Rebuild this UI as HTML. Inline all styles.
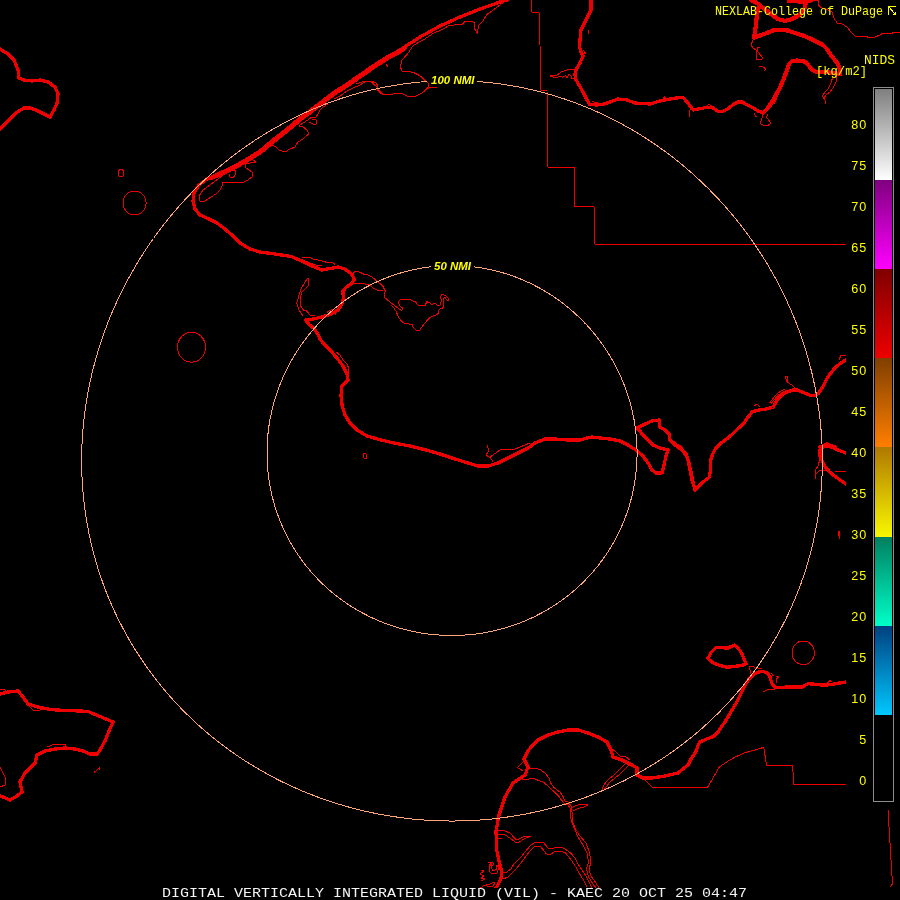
<!DOCTYPE html>
<html><head><meta charset="utf-8"><title>DIGITAL VERTICALLY INTEGRATED LIQUID (VIL) - KAEC</title>
<style>
html,body{margin:0;padding:0;background:#000;}
body{width:900px;height:900px;overflow:hidden;}
svg{display:block;}
.mono{font-family:"Liberation Mono",monospace;}
.sans{font-family:"Liberation Sans",sans-serif;}
</style></head><body>
<svg width="900" height="900" viewBox="0 0 900 900">
<defs><linearGradient id="g0" x1="0" y1="0" x2="0" y2="1"><stop offset="0" stop-color="#7f7f7f"/><stop offset="1" stop-color="#ffffff"/></linearGradient><linearGradient id="g1" x1="0" y1="0" x2="0" y2="1"><stop offset="0" stop-color="#7f007f"/><stop offset="1" stop-color="#ff00ff"/></linearGradient><linearGradient id="g2" x1="0" y1="0" x2="0" y2="1"><stop offset="0" stop-color="#7f0000"/><stop offset="1" stop-color="#ee0000"/></linearGradient><linearGradient id="g3" x1="0" y1="0" x2="0" y2="1"><stop offset="0" stop-color="#7f3f00"/><stop offset="1" stop-color="#ff7f00"/></linearGradient><linearGradient id="g4" x1="0" y1="0" x2="0" y2="1"><stop offset="0" stop-color="#b07800"/><stop offset="1" stop-color="#f8f800"/></linearGradient><linearGradient id="g5" x1="0" y1="0" x2="0" y2="1"><stop offset="0" stop-color="#007f60"/><stop offset="1" stop-color="#00ffc8"/></linearGradient><linearGradient id="g6" x1="0" y1="0" x2="0" y2="1"><stop offset="0" stop-color="#004080"/><stop offset="1" stop-color="#00c8ff"/></linearGradient>
<filter id="idt" filterUnits="userSpaceOnUse" x="0" y="0" width="900" height="900" color-interpolation-filters="sRGB"><feOffset dx="0" dy="0"/></filter>
<clipPath id="mapclip"><path d="M0 0H900V42H846V808H900V900H0Z"/></clipPath>
</defs>
<rect width="900" height="900" fill="#000"/>
<g clip-path="url(#mapclip)" shape-rendering="crispEdges" fill="none" stroke="#ee0000" stroke-linejoin="round" stroke-linecap="round">
<path stroke-width="3.3" d="M0 49 L8 54 L14 60 L18 70 L19 78 L24 80 L32 81 L40 80 L48 82 L55 87 L58 94 L57 103 L54 110 L50 117 L44 114 L36 110 L30 108 L24 108 L16 113 L8 121 L0 129 M507 0 L500 2 L480 9 L460 17 L440 26 L420 37 L400 50 L387 57 L373 66 L360 75 L347 84 L333 93 L320 103 L307 113 L300 118 L287 129 L273 140 L260 151 L247 159 L233 167 L220 173 L207 179 L199 185 L194 193 L193 201 L195 209 L200 215 L209 219 L217 223 L225 229 L233 236 L240 243 L250 249 L260 252 L275 254 L291 256.5 L302 261 L313 266.5 L322 270 L330 268.5 L338 267 L344.5 269 L351 273.5 L354.5 279 L352 283.5 L346.5 287 L343 291 L343.3 298 L342.5 303 L338 310 L330 314.5 L322 317 L313 319 L305.5 320 L309 324.5 L314.5 329 L318 334.5 L320 339 L323 343 L330 350 L337 358 L343 366 L347 374 L348 380 L342 386 L341 395 L342 405 L345 415 L350 423 L357 430 L367 436 L380 439.7 L395 443.3 L410 446 L425 449.7 L440 454 L455 459 L468 463 L478 466 L488 466 L498 463 L508 458 L518 453 L528 448 L535 443 L545 439 L555 439 L568 440 L580 440 L587 438 L592 437 L600 438 L610 439 L620 441 L628 445 L636 450 L643 456 L648 463 L652 470 L656 473 L662 473 L664 465 L666 456 L668 450 L660 448 L653 445 L648 440 L643 435 L639 430 L637 428 L645 424 L652 421 L659 420 L660 427 L665 430 L669 434 L670 440 L675 445 L680 448 L686 455 L689 463 L691 472 L693 482 L695 490 L700 485 L703.3 481.7 L709.2 477.5 L710.8 468.3 L710.8 460 L712.5 454.2 L715.8 448.3 L720.8 443.3 L727.5 438.3 L733.3 433.3 L740 426.7 L745 421.7 L748.3 416.7 L752.5 411.7 L758.3 410 L765 409.2 L772.5 407.5 L775 404.2 L777.5 399.2 L781.7 395 L786.7 392.5 L792.5 390 L797.5 390 L803.3 392.5 L809.2 395 L814.2 395.8 L818.3 393.7 L822.5 387.5 L825.8 380.8 L829.2 375 L833.3 370 L838.3 365 L846 359.5 M695 490 L692 480 L690 470 L688 460 L686 454 L680 447 L675 444 L670 440 M591 0 L591 10 L586 20 L581 30 L580 40 L579.5 47 L581 52 L583 56 L580.5 62 L577 68 L575 73.5 L575.5 79 L579 85 L583 92 L586.5 99 L589.5 104.5 L597 105 L604 104 L610 102 L618 99 L627 100 L635 103 L650 104 L660 101 L668 99.3 L676 98 L683 97.3 L687 102 L691 107 L693.3 110 L700 108.7 L707 107.3 L713.3 108 L718 111.3 L723 111.3 L728 108.7 L733 104.7 L737.5 102 L742 102 L747 104.7 L753.3 108 L759 111.5 L763.3 112.7 M846 453 L840 450.8 L834.2 448.3 L828.3 445.8 L823.3 446.7 L820 450 L820 455.8 L822.5 461.7 L825 466.7 L829.2 471.7 L834.2 475.8 L840 480 L846 484 M820 447 L827 444 L835 447 M707.8 658.4 L711.3 652.2 L715.8 647.8 L722 647.8 L728 648 L734.4 645.1 L738 647.8 L741.6 653.1 L744.2 659.3 L746 663.8 L741.6 665.6 L734.4 666.4 L727.3 667.3 L720.2 665.6 L713.1 662.9 L707.8 658.4 M496 888 L498.7 883.3 L501.3 877.3 L501.3 870 L499.3 862 L496.7 850 L496 831 L499 815 L505 797 L513 783 L525 775 L528 767 L524 759 L528 751 L531 747 L538 740 L548 735 L558 732 L568 730 L578 730 L588 733 L598 737 L607 742 L611 750 L613 757 L622 760 L632 765 L637 768 L637 775 L643 778 L652 778 L665 776 L678 773 L688 765 L691 759 L695.3 752.7 L699.5 742 L706 739.3 L713 736.7 L718.4 731.3 L724.7 722.4 L731 711.8 L736.2 703 L740.7 694 L745 685 L749.6 678 L755 673.6 L761 671.2 L767.3 672.7 L770 677 L771.8 683.3 L775.3 687.8 L780.7 687.8 L786 687 L795 687 L802 687 L808.2 683.7 L814.4 684.2 L821.6 685 L830.4 684.8 L837.6 683.3 L846 682 M0 694 L8 692 L18 691 L23 697 L28 704 L38 707 L50 709.5 L65 710.5 L80 711 L88 711.5 L100 716.5 L113 722 L109 731 L105 741 L100 750 L97 754 L90 754 L83 751 L75 749 L65 748 L55 749 L45 751 L37 755 L35 763 L30 768 L25 773 L20 782 L22 792 L17 796 L10 800 L3 797 L0 796"/>
<path stroke-width="4.2" d="M763.3 112.7 L768 108 L772 102 L776 95 L780 87.5 L784 78 L787 70 L789 64 L792 61 L797 60.5 L802 61 L806 62 L809 66 L812 70 L817 72 L825 72 L833 73 L840 74 L840 70 L838 64 L834 59 L830 54 L827 49 L823 45 L817 42 L810 38.5 L803 35.5 L795 33 L788 30.5 L780 30 L773 30.5 L767 33 L760 35.5 L754 37.5 L755 32 L756 24 L757 15 L759 5 M751 0 L757 3 L760 5.5 L766 10 L772 15 L778 19 L785 21 L792 19 L798 16 L803 12 L805 7 L806 2 L807 0 M789 1 L800 1.5 L806 1.5 L812 0"/>
<path stroke-width="3.3" d="M404 47 L400 50 L387 57 L373 66 L360 75 L347 84 L333 93 L320 103 L307 113 L300 118 L287 129 L273 140 L260 151 L247 159 L233 167 L220 173 L210 177" transform="translate(1,1.4)"/>
<path stroke-width="1" d="M531 0 L532 12 L539 13 L540 45 L541 90 L547 90 L548 167 L574 167 L574 206 L594 206 L595 244 L846 244 M652 787 L707.8 787 L719.3 767 L727.3 761.6 L735.3 757 L745 752.7 L755 750 L763.8 747.3 L766.5 765.5 L792.5 765.5 L794 784.5 L846 784.5 M643 778 L650 785 L652 787 M888 810 L890 843 L892.5 884 L890 887 M812 0 L818 0 L818 5 L822 8 L826 9 L832 12 L834 18 L837 23 L842 24 L847 27 L851 32 L855 36 L860 37 L865 36 L870 38 L875 37 L880 35 L883 33 L890 34 L895 32 L900 33 M506.7 0 L496 8 L486.7 14.7 L482.7 21.3 L478.7 25.3 L477.3 33.3 L474 28 L474.7 22.7 L472 21.3 L465.3 21.3 L462.7 24 L458.7 24.7 L449.3 25.3 L444 28.7 L433.3 33.3 L425.3 38.7 L413.3 45.3 L408 53.3 L402.7 59.3 L401.6 60.7 L400.4 67.2 L402.3 71.5 L408.8 71.5 L414.6 73 L420.3 76 L424 79.5 L428 83 L429 86.7 L426 89.6 L421.8 93.2 L416 96 L407.3 96 L403 94 L395.8 93.6 L390 94.5 L382 94 L377 87 L370 81 L362 82 L356 84 M428 88.5 L432 87 L437 88 M272 145 L276 147 L279 150 L285 152 L290 149 L295 147 L298 142 L303 139 L306 136 L309 134 L307 130 L303 127 L299 126 L303 123 L308 120 L312 117 L316 117 L318 114 L320 110 L323 107 L328 104 M309 122 L313 124 L316 124 L316 120 L312 119 M224 174 L222 176 L215 181 L210 185 L203 190 L199 196 L200 201 L205 201 L211 197 L216 194 L220 190 L222 186 L223 182 L230 183 L236 182 L242 183 L248 180 L252 177 L252 172 L249 170 L246 168 L245 164 L250 163 L256 162 L253 160 M229 174 L230 177 L233 178 L235 175 L235 170 L232 170 M334 99 L340 96 L347 91 L353 88 L360 85 L366 81 L371 81 L376 83 L378 86 L377 89 L380 93 L383 94 M386 64 L388 67 M308 278 L305 282 L301 289 L299 295.5 L296.7 303.3 L299 310 L303 316 M308 278 L309 279 L308.3 286 L305 289 L302 292 L300 298 L300 305 L303.3 310 L306.7 311 L310 315 L315 316 M302 258 L308 257 L313.3 259 L320 260.5 L325.5 262 L328 263 L331 262 L334.5 264 M353 275 L354 272.3 L356.7 271 L360 272.3 L364 274.3 L368 275 L372 277 L375.3 279.7 L379.3 283 L383.3 287 L385.3 291 L384 295 L384.7 297.7 L388 300.3 L391.3 303 L394 305 L397.3 307.7 L400 309.7 L402 310.3 L403 308 L400 306.3 L398.4 303 L399.3 300.3 L403.3 299 L409.3 299 L413.3 301 L415 301 L417.3 304.3 L418.7 305.7 L425.3 305.4 L426.7 301.7 L430 303 L432 305 L434 303 L437.3 305 L440 305 L441.3 301 L440.7 296.3 L442 294.3 L445.3 295.7 L448 297.7 L449 301 L447 300 L444.7 297 L443 299 L444 303.7 L443.3 307.7 L440 309 L438 311 L439 313 L436 315 L430.7 317 L426.7 321 L422.7 325.7 L420 329.7 L419 331 L416 330.3 L412.7 327 L412 324.3 L409 324 L405.3 323.7 L402 321.7 L398.7 317.7 L397.3 314.3 L396 311 L394 308.3 L391 305 M350 283 L354 283.7 L358 284 L362 283 L366 284.3 L370 285 L372.7 287.7 L376 289.7 L380 290.7 L383 290 M336 352 L340 355 L343 360 L347 364 L349 369 L348 374 M364 453 L366 454 L367 458 L365 459 L363 457 L364 453 M487.5 446 L489 451 L486 455 L490 457.5 L492.5 461 M490 457 L500 450 L515 449 L522.5 446 L530 443 M574.5 69.5 L568.3 69.5 L561.7 71.7 L560 73 L557 75 L554 75.6 L550.5 76 L553 77 L556.7 77.8 L560 76 L562.8 77.2 L565.6 75.6 L567.2 77.8 L569 74 L571 75.6 L572.2 79 L574 78 M753 40 L751 45 L753 48 L756 50 L756 59 L762 59 L762.5 57.5 L758 52 L757 48 L760 47 M759.5 66.6 L763 67 L765.7 69 L764 71 M833 76 L831 83 L828 89 L825 92 L822.5 96 L825 100 L826 104 M837 76 L836 82 L833 88 L830 92 L826 95 L824 98 M762 114 L762 118 L760 123.3 L763.3 125.3 L768 125.3 L770.7 123.3 L768.7 120 L766.7 118 L767.3 114 M691 108 L689.3 112 L690 117.3 M588 30 L588 34 M839 360 L841 355 L846 355 M785 376 L787 382 L792 385 L796 389 M785 376 L788 377 L787 382 M771 404 L774 400 L777 396.5 L781 393 L785 391 L788 390 M754 406 L757 404 L760 407 M819 456 L819.2 461.7 L818.3 465.8 L815 470 L815 476.7 L816 479 L815 475 L817.5 472.5 L820 470.3 L826 470 M835 472 L840 471.3 L846 471 M839 531 L840 539 L838.5 535 L839 531 M675 444 L678 449 L683 452 M763 692 L767 690 L771 689 L775 690 M751 674 L750 670 L749 666 L753 666 L756 669 M771 673 L773 675.5 M528 768 L533 768 L540 769.5 L545 773 L549 778 L551 783.5 L554.5 788 L560 792 L563 796.5 L565 801 L568 802 L571 806 L572 812 L572 820 L575 828 L579.5 835.5 L586 843 L589.5 852.5 L591 862 L589 869 L591 876 L596 883 L599 888 M522 780 L527 779.5 L533 778 L537.5 780 L543 782 L547 785 L551 789 L554.5 792 L558.5 796 L561.5 800 L564 803 L568 805 L570 808 L570 815 L572 823 L575 830 L578 837 L583 845 L587 853 L588.5 862 L586.5 869 L588.5 877 L593 884 L596 888 M571 808 L575 806 L579.5 804.5 L585 804 L588 805 L584 807 L578 808.5 L574 810.5 M498 830 L505 831 L510 833 L513.5 837 L516.5 840 L520.5 838.5 L524 836.5 L531 836 L524 839 L519 842 L515 842 L510 838 L505 835 L498 834 M503 873 L507 872 L511 869 L514 864 L518 860 L522 856 L525 852 L530 846 L533 843.5 L536 842 L543 842 L546 845.5 L549 849 L554.5 848 L561 847 L566 849.5 L571 853.5 L575 858 L578 864 L582 870 L586 876 L589.5 883 L592 888 M503 879 L508 877 L512 873 L516 869 L520 864 L524 859 L527 855 L530 851 L533 848 L535 846 L540 846 L543 849.5 L546 853.5 L550 855 L554 852 L560 851 L565 852.5 L568.5 856.5 L572.5 862 L576.5 868 L580 874.5 L583.5 880 L587 887 M627 762 L623 766 L619 770 L614 775 L609 779 L606 782 L603.5 786 L602 790 M630 764 L625 769 L620 774 L615 778 L610 782 L607 786 L604 790 L602 790 M522.5 762.5 L517.5 767.5 L523 771 M481 870 L484 871 L480 874 L484 876 L481 878 L485 879 L481 881 M489 866 L492 862 L494 864 L491 867 L493 871 L497 869 L496 865 L499 867 L497 873 L492 874 L489 871 L489 866 M481 887.5 L484 885.5 L489 884.5 L493 882.5 L495 883 L493 886 L487 887 M607 744 L611 748 L616 752 L620 756 L626 757 L630 760 M94.5 772 L99.5 768 L99 770 M28 705 L33 710 L38 711 L42 709 M47 747 L55 744 L65 744 L65 748 M0 767 L5 777 L5 785 L0 787 M0 690 L4 689 L7 692 M498 838 L502 838.5 M488 863 L491 862 L492 865 L489 866 M305 261 L311 263.3 L315.5 265 L322 266 M327.5 312 L332 309.5 L335.5 314 M583 50 L585.5 53 L583 55 M591.7 101 L595 102.5 L598 102 M707 106 L709.3 104.3 L711.5 106 M663 99 L664.5 97 L666 99 M754.5 114 L756 116.5 M774 104 L776.5 99 L775 98 M770 402.5 L773 398.5 L776 395 L780 391.5 L784 389.5 M758 668 L762 669 M776 676 L779 677 L776 679 L776 683 M828 682.5 L830 680.5 L832 682"/>
<ellipse cx="121" cy="173.2" rx="3" ry="3.7" stroke-width="1"/><ellipse cx="134.6" cy="203" rx="11.5" ry="12" stroke-width="1"/><ellipse cx="191.5" cy="347.2" rx="14" ry="15" stroke-width="1"/><ellipse cx="803.2" cy="652.8" rx="11.2" ry="11.8" stroke-width="1"/>
</g>
<g shape-rendering="crispEdges" fill="none" stroke="#fca67a" stroke-width="1">
<path d="M477.1 81.5 L480.3 81.7 L483.4 82.0 L486.5 82.3 L489.7 82.6 L492.8 83.0 L495.9 83.4 L499.0 83.8 L502.1 84.2 L505.3 84.7 L508.4 85.2 L511.5 85.7 L514.6 86.2 L517.7 86.8 L520.8 87.4 L523.9 88.0 L526.9 88.7 L530.0 89.4 L533.1 90.1 L536.2 90.8 L539.2 91.6 L542.3 92.4 L545.3 93.2 L548.4 94.1 L551.4 94.9 L554.4 95.8 L557.4 96.8 L560.5 97.7 L563.5 98.7 L566.5 99.7 L569.4 100.8 L572.4 101.8 L575.4 102.9 L578.4 104.0 L581.3 105.2 L584.3 106.4 L587.2 107.6 L590.1 108.8 L593.1 110.0 L596.0 111.3 L598.9 112.6 L601.7 113.9 L604.6 115.3 L607.5 116.7 L610.3 118.1 L613.2 119.5 L616.0 120.9 L618.8 122.4 L621.7 123.9 L624.4 125.5 L627.2 127.0 L630.0 128.6 L632.8 130.2 L635.5 131.8 L638.3 133.5 L641.0 135.2 L643.7 136.9 L646.4 138.6 L649.1 140.3 L651.7 142.1 L654.4 143.9 L657.0 145.7 L659.6 147.5 L662.2 149.4 L664.8 151.3 L667.4 153.2 L670.0 155.1 L672.5 157.1 L675.1 159.1 L677.6 161.1 L680.1 163.1 L682.6 165.1 L685.0 167.2 L687.5 169.3 L689.9 171.4 L692.3 173.5 L694.7 175.7 L697.1 177.9 L699.5 180.1 L701.8 182.3 L704.2 184.5 L706.5 186.8 L708.8 189.0 L711.0 191.3 L713.3 193.6 L715.5 196.0 L717.8 198.3 L720.0 200.7 L722.1 203.1 L724.3 205.5 L726.4 207.9 L728.6 210.4 L730.7 212.8 L732.7 215.3 L734.8 217.8 L736.8 220.3 L738.9 222.9 L740.9 225.4 L742.8 228.0 L744.8 230.6 L746.7 233.2 L748.7 235.8 L750.5 238.5 L752.4 241.1 L754.3 243.8 L756.1 246.5 L757.9 249.2 L759.7 251.9 L761.5 254.6 L763.2 257.4 L764.9 260.1 L766.6 262.9 L768.3 265.7 L769.9 268.5 L771.5 271.3 L773.1 274.2 L774.7 277.0 L776.3 279.9 L777.8 282.7 L779.3 285.6 L780.8 288.5 L782.2 291.4 L783.7 294.3 L785.1 297.3 L786.5 300.2 L787.8 303.2 L789.2 306.2 L790.5 309.1 L791.8 312.1 L793.0 315.1 L794.3 318.1 L795.5 321.2 L796.7 324.2 L797.8 327.2 L799.0 330.3 L800.1 333.3 L801.1 336.4 L802.2 339.5 L803.2 342.6 L804.2 345.7 L805.2 348.8 L806.2 351.9 L807.1 355.0 L808.0 358.1 L808.9 361.2 L809.7 364.4 L810.5 367.5 L811.3 370.7 L812.1 373.8 L812.8 377.0 L813.5 380.2 L814.2 383.3 L814.9 386.5 L815.5 389.7 L816.1 392.9 L816.7 396.1 L817.2 399.3 L817.7 402.5 L818.2 405.7 L818.7 408.9 L819.1 412.1 L819.5 415.3 L819.9 418.5 L820.3 421.8 L820.6 425.0 L820.9 428.2 L821.2 431.4 L821.4 434.7 L821.6 437.9 L821.8 441.1 L822.0 444.3 L822.1 447.6 L822.2 450.8 L822.3 454.0 L822.3 457.3 L822.3 460.5 L822.3 463.7 L822.3 466.9 L822.2 470.2 L822.1 473.4 L822.0 476.6 L821.8 479.8 L821.7 483.1 L821.5 486.3 L821.2 489.5 L820.9 492.7 L820.7 495.9 L820.3 499.1 L820.0 502.3 L819.6 505.5 L819.2 508.7 L818.8 511.9 L818.3 515.1 L817.8 518.3 L817.3 521.4 L816.7 524.6 L816.1 527.8 L815.5 530.9 L814.9 534.1 L814.2 537.2 L813.6 540.4 L812.8 543.5 L812.1 546.6 L811.3 549.7 L810.5 552.8 L809.7 555.9 L808.8 559.0 L807.9 562.1 L807.0 565.2 L806.1 568.3 L805.1 571.3 L804.1 574.4 L803.1 577.4 L802.0 580.4 L801.0 583.5 L799.9 586.5 L798.7 589.5 L797.6 592.5 L796.4 595.4 L795.2 598.4 L793.9 601.4 L792.6 604.3 L791.3 607.3 L790.0 610.2 L788.7 613.1 L787.3 616.0 L785.9 618.9 L784.5 621.7 L783.0 624.6 L781.5 627.4 L780.0 630.3 L778.5 633.1 L776.9 635.9 L775.4 638.7 L773.7 641.5 L772.1 644.2 L770.4 647.0 L768.8 649.7 L767.0 652.4 L765.3 655.1 L763.5 657.8 L761.8 660.5 L760.0 663.1 L758.1 665.8 L756.3 668.4 L754.4 671.0 L752.5 673.6 L750.5 676.2 L748.6 678.7 L746.6 681.3 L744.6 683.8 L742.6 686.3 L740.5 688.8 L738.4 691.2 L736.3 693.7 L734.2 696.1 L732.1 698.5 L729.9 700.9 L727.7 703.3 L725.5 705.6 L723.3 708.0 L721.0 710.3 L718.8 712.6 L716.5 714.8 L714.2 717.1 L711.8 719.3 L709.5 721.5 L707.1 723.7 L704.7 725.9 L702.3 728.1 L699.8 730.2 L697.4 732.3 L694.9 734.4 L692.4 736.5 L689.9 738.5 L687.3 740.5 L684.8 742.5 L682.2 744.5 L679.6 746.5 L677.0 748.4 L674.4 750.3 L671.7 752.2 L669.0 754.1 L666.4 755.9 L663.7 757.7 L660.9 759.5 L658.2 761.3 L655.4 763.0 L652.7 764.7 L649.9 766.4 L647.1 768.1 L644.3 769.8 L641.4 771.4 L638.6 773.0 L635.7 774.6 L632.8 776.1 L629.9 777.7 L627.0 779.2 L624.1 780.7 L621.2 782.1 L618.2 783.5 L615.3 784.9 L612.3 786.3 L609.3 787.7 L606.3 789.0 L603.3 790.3 L600.2 791.6 L597.2 792.8 L594.2 794.0 L591.1 795.2 L588.0 796.4 L584.9 797.6 L581.8 798.7 L578.7 799.8 L575.6 800.8 L572.5 801.9 L569.3 802.9 L566.2 803.9 L563.0 804.8 L559.9 805.8 L556.7 806.7 L553.5 807.5 L550.3 808.4 L547.1 809.2 L543.9 810.0 L540.7 810.8 L537.5 811.5 L534.2 812.2 L531.0 812.9 L527.8 813.6 L524.5 814.2 L521.3 814.8 L518.0 815.4 L514.7 815.9 L511.5 816.4 L508.2 816.9 L504.9 817.4 L501.6 817.8 L498.3 818.2 L495.0 818.6 L491.7 819.0 L488.4 819.3 L485.1 819.6 L481.8 819.9 L478.5 820.1 L475.2 820.3 L471.9 820.5 L468.6 820.6 L465.3 820.8 L462.0 820.9 L458.6 820.9 L455.3 821.0 L452.0 821.0 L448.7 821.0 L445.4 820.9 L442.0 820.9 L438.7 820.8 L435.4 820.6 L432.1 820.5 L428.8 820.3 L425.5 820.1 L422.2 819.9 L418.9 819.6 L415.6 819.3 L412.3 819.0 L409.0 818.6 L405.7 818.2 L402.4 817.8 L399.1 817.4 L395.8 816.9 L392.5 816.4 L389.3 815.9 L386.0 815.4 L382.7 814.8 L379.5 814.2 L376.2 813.6 L373.0 812.9 L369.8 812.2 L366.5 811.5 L363.3 810.8 L360.1 810.0 L356.9 809.2 L353.7 808.4 L350.5 807.5 L347.3 806.7 L344.1 805.8 L341.0 804.8 L337.8 803.9 L334.7 802.9 L331.5 801.9 L328.4 800.8 L325.3 799.8 L322.2 798.7 L319.1 797.6 L316.0 796.4 L312.9 795.2 L309.8 794.0 L306.8 792.8 L303.8 791.6 L300.7 790.3 L297.7 789.0 L294.7 787.7 L291.7 786.3 L288.7 784.9 L285.8 783.5 L282.8 782.1 L279.9 780.7 L277.0 779.2 L274.1 777.7 L271.2 776.1 L268.3 774.6 L265.4 773.0 L262.6 771.4 L259.7 769.8 L256.9 768.1 L254.1 766.4 L251.3 764.7 L248.6 763.0 L245.8 761.3 L243.1 759.5 L240.3 757.7 L237.6 755.9 L235.0 754.1 L232.3 752.2 L229.6 750.3 L227.0 748.4 L224.4 746.5 L221.8 744.5 L219.2 742.5 L216.7 740.5 L214.1 738.5 L211.6 736.5 L209.1 734.4 L206.6 732.3 L204.2 730.2 L201.7 728.1 L199.3 725.9 L196.9 723.7 L194.5 721.5 L192.2 719.3 L189.8 717.1 L187.5 714.8 L185.2 712.6 L183.0 710.3 L180.7 708.0 L178.5 705.6 L176.3 703.3 L174.1 700.9 L171.9 698.5 L169.8 696.1 L167.7 693.7 L165.6 691.2 L163.5 688.8 L161.4 686.3 L159.4 683.8 L157.4 681.3 L155.4 678.7 L153.5 676.2 L151.5 673.6 L149.6 671.0 L147.7 668.4 L145.9 665.8 L144.0 663.1 L142.2 660.5 L140.5 657.8 L138.7 655.1 L137.0 652.4 L135.2 649.7 L133.6 647.0 L131.9 644.2 L130.3 641.5 L128.6 638.7 L127.1 635.9 L125.5 633.1 L124.0 630.3 L122.5 627.4 L121.0 624.6 L119.5 621.7 L118.1 618.9 L116.7 616.0 L115.3 613.1 L114.0 610.2 L112.7 607.3 L111.4 604.3 L110.1 601.4 L108.8 598.4 L107.6 595.4 L106.4 592.5 L105.3 589.5 L104.1 586.5 L103.0 583.5 L102.0 580.4 L100.9 577.4 L99.9 574.4 L98.9 571.3 L97.9 568.3 L97.0 565.2 L96.1 562.1 L95.2 559.0 L94.3 555.9 L93.5 552.8 L92.7 549.7 L91.9 546.6 L91.2 543.5 L90.4 540.4 L89.8 537.2 L89.1 534.1 L88.5 530.9 L87.9 527.8 L87.3 524.6 L86.7 521.4 L86.2 518.3 L85.7 515.1 L85.2 511.9 L84.8 508.7 L84.4 505.5 L84.0 502.3 L83.7 499.1 L83.3 495.9 L83.1 492.7 L82.8 489.5 L82.5 486.3 L82.3 483.1 L82.2 479.8 L82.0 476.6 L81.9 473.4 L81.8 470.2 L81.7 466.9 L81.7 463.7 L81.7 460.5 L81.7 457.3 L81.7 454.0 L81.8 450.8 L81.9 447.6 L82.0 444.3 L82.2 441.1 L82.4 437.9 L82.6 434.7 L82.8 431.4 L83.1 428.2 L83.4 425.0 L83.7 421.8 L84.1 418.5 L84.5 415.3 L84.9 412.1 L85.3 408.9 L85.8 405.7 L86.3 402.5 L86.8 399.3 L87.3 396.1 L87.9 392.9 L88.5 389.7 L89.1 386.5 L89.8 383.3 L90.5 380.2 L91.2 377.0 L91.9 373.8 L92.7 370.7 L93.5 367.5 L94.3 364.4 L95.1 361.2 L96.0 358.1 L96.9 355.0 L97.8 351.9 L98.8 348.8 L99.8 345.7 L100.8 342.6 L101.8 339.5 L102.9 336.4 L103.9 333.3 L105.0 330.3 L106.2 327.2 L107.3 324.2 L108.5 321.2 L109.7 318.1 L111.0 315.1 L112.2 312.1 L113.5 309.1 L114.8 306.2 L116.2 303.2 L117.5 300.2 L118.9 297.3 L120.3 294.3 L121.8 291.4 L123.2 288.5 L124.7 285.6 L126.2 282.7 L127.7 279.9 L129.3 277.0 L130.9 274.2 L132.5 271.3 L134.1 268.5 L135.7 265.7 L137.4 262.9 L139.1 260.1 L140.8 257.4 L142.5 254.6 L144.3 251.9 L146.1 249.2 L147.9 246.5 L149.7 243.8 L151.6 241.1 L153.5 238.5 L155.3 235.8 L157.3 233.2 L159.2 230.6 L161.2 228.0 L163.1 225.4 L165.1 222.9 L167.2 220.3 L169.2 217.8 L171.3 215.3 L173.3 212.8 L175.4 210.4 L177.6 207.9 L179.7 205.5 L181.9 203.1 L184.0 200.7 L186.2 198.3 L188.5 196.0 L190.7 193.6 L193.0 191.3 L195.2 189.0 L197.5 186.8 L199.8 184.5 L202.2 182.3 L204.5 180.1 L206.9 177.9 L209.3 175.7 L211.7 173.5 L214.1 171.4 L216.5 169.3 L219.0 167.2 L221.4 165.1 L223.9 163.1 L226.4 161.1 L228.9 159.1 L231.5 157.1 L234.0 155.1 L236.6 153.2 L239.2 151.3 L241.8 149.4 L244.4 147.5 L247.0 145.7 L249.6 143.9 L252.3 142.1 L254.9 140.3 L257.6 138.6 L260.3 136.9 L263.0 135.2 L265.7 133.5 L268.5 131.8 L271.2 130.2 L274.0 128.6 L276.8 127.0 L279.6 125.5 L282.3 123.9 L285.2 122.4 L288.0 120.9 L290.8 119.5 L293.7 118.1 L296.5 116.7 L299.4 115.3 L302.3 113.9 L305.1 112.6 L308.0 111.3 L310.9 110.0 L313.9 108.8 L316.8 107.6 L319.7 106.4 L322.7 105.2 L325.6 104.0 L328.6 102.9 L331.6 101.8 L334.6 100.8 L337.5 99.7 L340.5 98.7 L343.5 97.7 L346.6 96.8 L349.6 95.8 L352.6 94.9 L355.6 94.1 L358.7 93.2 L361.7 92.4 L364.8 91.6 L367.8 90.8 L370.9 90.1 L374.0 89.4 L377.1 88.7 L380.1 88.0 L383.2 87.4 L386.3 86.8 L389.4 86.2 L392.5 85.7 L395.6 85.2 L398.7 84.7 L401.9 84.2 L405.0 83.8 L408.1 83.4 L411.2 83.0 L414.3 82.6 L417.5 82.3 L420.6 82.0 L423.7 81.7 L426.9 81.5"/>
<path d="M474.2 266.9 L475.8 267.1 L477.4 267.3 L479.0 267.5 L480.6 267.8 L482.1 268.0 L483.7 268.3 L485.3 268.6 L486.8 268.9 L488.4 269.2 L490.0 269.5 L491.5 269.9 L493.1 270.2 L494.6 270.6 L496.2 271.0 L497.7 271.4 L499.3 271.8 L500.8 272.2 L502.3 272.7 L503.9 273.1 L505.4 273.6 L506.9 274.1 L508.4 274.6 L509.9 275.1 L511.5 275.6 L513.0 276.1 L514.5 276.7 L516.0 277.2 L517.5 277.8 L519.0 278.4 L520.4 279.0 L521.9 279.6 L523.4 280.2 L524.9 280.8 L526.3 281.5 L527.8 282.2 L529.2 282.8 L530.7 283.5 L532.1 284.2 L533.5 284.9 L535.0 285.7 L536.4 286.4 L537.8 287.2 L539.2 287.9 L540.6 288.7 L542.0 289.5 L543.4 290.3 L544.8 291.1 L546.2 291.9 L547.5 292.8 L548.9 293.6 L550.3 294.5 L551.6 295.3 L553.0 296.2 L554.3 297.1 L555.6 298.0 L556.9 299.0 L558.2 299.9 L559.6 300.8 L560.8 301.8 L562.1 302.8 L563.4 303.7 L564.7 304.7 L565.9 305.7 L567.2 306.7 L568.4 307.7 L569.7 308.8 L570.9 309.8 L572.1 310.9 L573.3 311.9 L574.5 313.0 L575.7 314.1 L576.9 315.2 L578.1 316.3 L579.3 317.4 L580.4 318.5 L581.6 319.7 L582.7 320.8 L583.8 322.0 L584.9 323.2 L586.1 324.3 L587.2 325.5 L588.2 326.7 L589.3 327.9 L590.4 329.1 L591.4 330.4 L592.5 331.6 L593.5 332.8 L594.6 334.1 L595.6 335.3 L596.6 336.6 L597.6 337.9 L598.5 339.2 L599.5 340.5 L600.5 341.8 L601.4 343.1 L602.4 344.4 L603.3 345.7 L604.2 347.0 L605.1 348.4 L606.0 349.7 L606.9 351.1 L607.8 352.5 L608.6 353.8 L609.5 355.2 L610.3 356.6 L611.1 358.0 L611.9 359.4 L612.7 360.8 L613.5 362.2 L614.3 363.6 L615.1 365.1 L615.8 366.5 L616.6 368.0 L617.3 369.4 L618.0 370.9 L618.7 372.3 L619.4 373.8 L620.1 375.3 L620.7 376.7 L621.4 378.2 L622.0 379.7 L622.7 381.2 L623.3 382.7 L623.9 384.2 L624.5 385.7 L625.0 387.2 L625.6 388.7 L626.2 390.3 L626.7 391.8 L627.2 393.3 L627.7 394.9 L628.2 396.4 L628.7 398.0 L629.2 399.5 L629.6 401.1 L630.1 402.6 L630.5 404.2 L630.9 405.7 L631.3 407.3 L631.7 408.9 L632.1 410.5 L632.4 412.0 L632.8 413.6 L633.1 415.2 L633.5 416.8 L633.8 418.4 L634.1 420.0 L634.3 421.6 L634.6 423.2 L634.9 424.8 L635.1 426.4 L635.3 428.0 L635.5 429.6 L635.7 431.2 L635.9 432.8 L636.1 434.4 L636.2 436.0 L636.4 437.6 L636.5 439.2 L636.6 440.8 L636.7 442.4 L636.8 444.0 L636.9 445.7 L636.9 447.3 L637.0 448.9 L637.0 450.5 L637.0 452.1 L637.0 453.7 L637.0 455.3 L637.0 457.0 L636.9 458.6 L636.9 460.2 L636.8 461.8 L636.7 463.4 L636.6 465.0 L636.5 466.6 L636.4 468.2 L636.2 469.8 L636.1 471.4 L635.9 473.0 L635.7 474.6 L635.5 476.2 L635.3 477.8 L635.1 479.4 L634.9 481.0 L634.6 482.6 L634.3 484.2 L634.1 485.8 L633.8 487.4 L633.5 489.0 L633.1 490.5 L632.8 492.1 L632.5 493.7 L632.1 495.3 L631.7 496.8 L631.3 498.4 L630.9 499.9 L630.5 501.5 L630.1 503.0 L629.6 504.6 L629.2 506.1 L628.7 507.7 L628.2 509.2 L627.7 510.7 L627.2 512.3 L626.6 513.8 L626.1 515.3 L625.5 516.8 L625.0 518.3 L624.4 519.8 L623.8 521.3 L623.2 522.8 L622.6 524.3 L621.9 525.7 L621.3 527.2 L620.6 528.7 L619.9 530.1 L619.3 531.6 L618.6 533.0 L617.8 534.5 L617.1 535.9 L616.4 537.4 L615.6 538.8 L614.9 540.2 L614.1 541.6 L613.3 543.0 L612.5 544.4 L611.7 545.8 L610.9 547.2 L610.0 548.5 L609.2 549.9 L608.3 551.3 L607.4 552.6 L606.5 554.0 L605.6 555.3 L604.7 556.6 L603.8 557.9 L602.9 559.2 L601.9 560.5 L600.9 561.8 L600.0 563.1 L599.0 564.4 L598.0 565.7 L597.0 566.9 L596.0 568.2 L594.9 569.4 L593.9 570.6 L592.9 571.9 L591.8 573.1 L590.7 574.3 L589.6 575.5 L588.5 576.7 L587.4 577.8 L586.3 579.0 L585.2 580.2 L584.1 581.3 L582.9 582.5 L581.8 583.6 L580.6 584.7 L579.4 585.8 L578.2 586.9 L577.0 588.0 L575.8 589.1 L574.6 590.1 L573.4 591.2 L572.1 592.2 L570.9 593.3 L569.6 594.3 L568.4 595.3 L567.1 596.3 L565.8 597.3 L564.5 598.2 L563.2 599.2 L561.9 600.2 L560.6 601.1 L559.3 602.0 L558.0 603.0 L556.6 603.9 L555.3 604.8 L553.9 605.7 L552.5 606.5 L551.2 607.4 L549.8 608.2 L548.4 609.1 L547.0 609.9 L545.6 610.7 L544.2 611.5 L542.7 612.3 L541.3 613.1 L539.9 613.8 L538.4 614.6 L537.0 615.3 L535.5 616.1 L534.1 616.8 L532.6 617.5 L531.1 618.2 L529.7 618.8 L528.2 619.5 L526.7 620.2 L525.2 620.8 L523.7 621.4 L522.2 622.0 L520.7 622.6 L519.1 623.2 L517.6 623.8 L516.1 624.3 L514.5 624.9 L513.0 625.4 L511.5 625.9 L509.9 626.4 L508.3 626.9 L506.8 627.4 L505.2 627.9 L503.7 628.3 L502.1 628.8 L500.5 629.2 L498.9 629.6 L497.3 630.0 L495.8 630.4 L494.2 630.8 L492.6 631.1 L491.0 631.5 L489.4 631.8 L487.8 632.1 L486.2 632.4 L484.6 632.7 L482.9 633.0 L481.3 633.2 L479.7 633.5 L478.1 633.7 L476.5 633.9 L474.8 634.1 L473.2 634.3 L471.6 634.5 L470.0 634.6 L468.3 634.8 L466.7 634.9 L465.1 635.0 L463.4 635.2 L461.8 635.2 L460.2 635.3 L458.5 635.4 L456.9 635.4 L455.3 635.5 L453.6 635.5 L452.0 635.5 L450.4 635.5 L448.7 635.5 L447.1 635.4 L445.5 635.4 L443.8 635.3 L442.2 635.2 L440.6 635.2 L438.9 635.0 L437.3 634.9 L435.7 634.8 L434.0 634.6 L432.4 634.5 L430.8 634.3 L429.2 634.1 L427.5 633.9 L425.9 633.7 L424.3 633.5 L422.7 633.2 L421.1 633.0 L419.4 632.7 L417.8 632.4 L416.2 632.1 L414.6 631.8 L413.0 631.5 L411.4 631.1 L409.8 630.8 L408.2 630.4 L406.7 630.0 L405.1 629.6 L403.5 629.2 L401.9 628.8 L400.3 628.3 L398.8 627.9 L397.2 627.4 L395.7 626.9 L394.1 626.4 L392.5 625.9 L391.0 625.4 L389.5 624.9 L387.9 624.3 L386.4 623.8 L384.9 623.2 L383.3 622.6 L381.8 622.0 L380.3 621.4 L378.8 620.8 L377.3 620.2 L375.8 619.5 L374.3 618.8 L372.9 618.2 L371.4 617.5 L369.9 616.8 L368.5 616.1 L367.0 615.3 L365.6 614.6 L364.1 613.8 L362.7 613.1 L361.3 612.3 L359.8 611.5 L358.4 610.7 L357.0 609.9 L355.6 609.1 L354.2 608.2 L352.8 607.4 L351.5 606.5 L350.1 605.7 L348.7 604.8 L347.4 603.9 L346.0 603.0 L344.7 602.0 L343.4 601.1 L342.1 600.2 L340.8 599.2 L339.5 598.2 L338.2 597.3 L336.9 596.3 L335.6 595.3 L334.4 594.3 L333.1 593.3 L331.9 592.2 L330.6 591.2 L329.4 590.1 L328.2 589.1 L327.0 588.0 L325.8 586.9 L324.6 585.8 L323.4 584.7 L322.2 583.6 L321.1 582.5 L319.9 581.3 L318.8 580.2 L317.7 579.0 L316.6 577.8 L315.5 576.7 L314.4 575.5 L313.3 574.3 L312.2 573.1 L311.1 571.9 L310.1 570.6 L309.1 569.4 L308.0 568.2 L307.0 566.9 L306.0 565.7 L305.0 564.4 L304.0 563.1 L303.1 561.8 L302.1 560.5 L301.1 559.2 L300.2 557.9 L299.3 556.6 L298.4 555.3 L297.5 554.0 L296.6 552.6 L295.7 551.3 L294.8 549.9 L294.0 548.5 L293.1 547.2 L292.3 545.8 L291.5 544.4 L290.7 543.0 L289.9 541.6 L289.1 540.2 L288.4 538.8 L287.6 537.4 L286.9 535.9 L286.2 534.5 L285.4 533.0 L284.7 531.6 L284.1 530.1 L283.4 528.7 L282.7 527.2 L282.1 525.7 L281.4 524.3 L280.8 522.8 L280.2 521.3 L279.6 519.8 L279.0 518.3 L278.5 516.8 L277.9 515.3 L277.4 513.8 L276.8 512.3 L276.3 510.7 L275.8 509.2 L275.3 507.7 L274.8 506.1 L274.4 504.6 L273.9 503.0 L273.5 501.5 L273.1 499.9 L272.7 498.4 L272.3 496.8 L271.9 495.3 L271.5 493.7 L271.2 492.1 L270.9 490.5 L270.5 489.0 L270.2 487.4 L269.9 485.8 L269.7 484.2 L269.4 482.6 L269.1 481.0 L268.9 479.4 L268.7 477.8 L268.5 476.2 L268.3 474.6 L268.1 473.0 L267.9 471.4 L267.8 469.8 L267.6 468.2 L267.5 466.6 L267.4 465.0 L267.3 463.4 L267.2 461.8 L267.1 460.2 L267.1 458.6 L267.0 457.0 L267.0 455.3 L267.0 453.7 L267.0 452.1 L267.0 450.5 L267.0 448.9 L267.1 447.3 L267.1 445.7 L267.2 444.0 L267.3 442.4 L267.4 440.8 L267.5 439.2 L267.6 437.6 L267.8 436.0 L267.9 434.4 L268.1 432.8 L268.3 431.2 L268.5 429.6 L268.7 428.0 L268.9 426.4 L269.1 424.8 L269.4 423.2 L269.7 421.6 L269.9 420.0 L270.2 418.4 L270.5 416.8 L270.9 415.2 L271.2 413.6 L271.6 412.0 L271.9 410.5 L272.3 408.9 L272.7 407.3 L273.1 405.7 L273.5 404.2 L273.9 402.6 L274.4 401.1 L274.8 399.5 L275.3 398.0 L275.8 396.4 L276.3 394.9 L276.8 393.3 L277.3 391.8 L277.8 390.3 L278.4 388.7 L279.0 387.2 L279.5 385.7 L280.1 384.2 L280.7 382.7 L281.3 381.2 L282.0 379.7 L282.6 378.2 L283.3 376.7 L283.9 375.3 L284.6 373.8 L285.3 372.3 L286.0 370.9 L286.7 369.4 L287.4 368.0 L288.2 366.5 L288.9 365.1 L289.7 363.6 L290.5 362.2 L291.3 360.8 L292.1 359.4 L292.9 358.0 L293.7 356.6 L294.5 355.2 L295.4 353.8 L296.2 352.5 L297.1 351.1 L298.0 349.7 L298.9 348.4 L299.8 347.0 L300.7 345.7 L301.6 344.4 L302.6 343.1 L303.5 341.8 L304.5 340.5 L305.5 339.2 L306.4 337.9 L307.4 336.6 L308.4 335.3 L309.4 334.1 L310.5 332.8 L311.5 331.6 L312.6 330.4 L313.6 329.1 L314.7 327.9 L315.8 326.7 L316.8 325.5 L317.9 324.3 L319.1 323.2 L320.2 322.0 L321.3 320.8 L322.4 319.7 L323.6 318.5 L324.7 317.4 L325.9 316.3 L327.1 315.2 L328.3 314.1 L329.5 313.0 L330.7 311.9 L331.9 310.9 L333.1 309.8 L334.3 308.8 L335.6 307.7 L336.8 306.7 L338.1 305.7 L339.3 304.7 L340.6 303.7 L341.9 302.8 L343.2 301.8 L344.4 300.8 L345.8 299.9 L347.1 299.0 L348.4 298.0 L349.7 297.1 L351.0 296.2 L352.4 295.3 L353.7 294.5 L355.1 293.6 L356.5 292.8 L357.8 291.9 L359.2 291.1 L360.6 290.3 L362.0 289.5 L363.4 288.7 L364.8 287.9 L366.2 287.2 L367.6 286.4 L369.0 285.7 L370.5 284.9 L371.9 284.2 L373.3 283.5 L374.8 282.8 L376.2 282.2 L377.7 281.5 L379.1 280.8 L380.6 280.2 L382.1 279.6 L383.6 279.0 L385.0 278.4 L386.5 277.8 L388.0 277.2 L389.5 276.7 L391.0 276.1 L392.5 275.6 L394.1 275.1 L395.6 274.6 L397.1 274.1 L398.6 273.6 L400.1 273.1 L401.7 272.7 L403.2 272.2 L404.7 271.8 L406.3 271.4 L407.8 271.0 L409.4 270.6 L410.9 270.2 L412.5 269.9 L414.0 269.5 L415.6 269.2 L417.2 268.9 L418.7 268.6 L420.3 268.3 L421.9 268.0 L423.4 267.8 L425.0 267.5 L426.6 267.3 L428.2 267.1 L429.8 266.9 L431.3 266.7"/>
</g>
<g filter="url(#idt)" class="sans" font-size="11.5" font-weight="bold" font-style="italic" fill="#ffff00">
<text x="431" y="84">100 NMI</text>
<text x="434" y="269.5">50 NMI</text>
</g>
<rect x="846" y="42" width="54" height="766" fill="#000"/>
<rect x="873.5" y="87.5" width="20" height="714" fill="none" stroke="#8c8c8c" stroke-width="1" shape-rendering="crispEdges"/>
<rect x="875" y="89" width="17" height="91" fill="url(#g0)"/><rect x="875" y="180" width="17" height="89" fill="url(#g1)"/><rect x="875" y="269" width="17" height="89" fill="url(#g2)"/><rect x="875" y="358" width="17" height="89" fill="url(#g3)"/><rect x="875" y="447" width="17" height="90" fill="url(#g4)"/><rect x="875" y="537" width="17" height="89" fill="url(#g5)"/><rect x="875" y="626" width="17" height="89" fill="url(#g6)"/>
<g filter="url(#idt)" class="sans" font-size="12.6" fill="#ffff00"><text x="851.2 859.3" y="129">80</text><text x="851.2 859.3" y="170">75</text><text x="851.2 859.3" y="211">70</text><text x="851.2 859.3" y="252">65</text><text x="851.2 859.3" y="293">60</text><text x="851.2 859.3" y="334">55</text><text x="851.2 859.3" y="375">50</text><text x="851.2 859.3" y="416">45</text><text x="851.2 859.3" y="457">40</text><text x="851.2 859.3" y="498">35</text><text x="851.2 859.3" y="539">30</text><text x="851.2 859.3" y="580">25</text><text x="851.2 859.3" y="621">20</text><text x="851.2 859.3" y="662">15</text><text x="851.2 859.3" y="703">10</text><text x="859.3" y="744">5</text><text x="859.3" y="785">0</text></g>
<g filter="url(#idt)" class="mono" fill="#ffff00">
<text x="715" y="15" font-size="12.5" textLength="168" lengthAdjust="spacingAndGlyphs">NEXLAB-College of DuPage</text>
<text x="864" y="64" font-size="13.4" textLength="31" lengthAdjust="spacingAndGlyphs">NIDS</text>
<text x="816" y="74.5" font-size="12.5" textLength="51" lengthAdjust="spacingAndGlyphs">[kg/m2]</text>
</g>
<path d="M888.5 14.5V6.5H895.5M888.5 6.5L895 14M895.5 11.5V14.5H892.5" fill="none" stroke="#ffff00" stroke-width="1" shape-rendering="crispEdges"/>
<rect x="0" y="888" width="900" height="12" fill="#000"/>
<text filter="url(#idt)" class="mono" x="162" y="897" font-size="12.2" fill="#f4f4f4" textLength="585" lengthAdjust="spacingAndGlyphs">DIGITAL VERTICALLY INTEGRATED LIQUID (VIL) - KAEC 20 OCT 25 04:47</text>
</svg>
</body></html>
